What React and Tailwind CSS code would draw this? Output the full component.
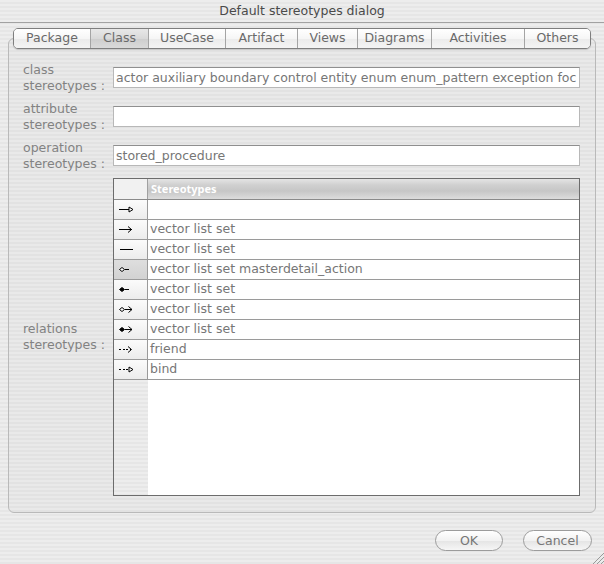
import React from 'react';

const TABS = [
  { name: 'Package',    w: 'w-[76px]' },
  { name: 'Class',      w: 'w-[58px]', active: true },
  { name: 'UseCase',    w: 'w-[77px]' },
  { name: 'Artifact',   w: 'w-[72px]' },
  { name: 'Views',      w: 'w-[60px]' },
  { name: 'Diagrams',   w: 'w-[74px]' },
  { name: 'Activities', w: 'w-[93px]' },
  { name: 'Others',     w: 'w-[66px]' },
];

const ROWS = [
  { icon: 'generalisation', text: '' },
  { icon: 'arrow',          text: 'vector list set' },
  { icon: 'line',           text: 'vector list set' },
  { icon: 'aggregation',    text: 'vector list set masterdetail_action', selected: true },
  { icon: 'composition',    text: 'vector list set' },
  { icon: 'aggArrow',       text: 'vector list set' },
  { icon: 'compArrow',      text: 'vector list set' },
  { icon: 'dependency',     text: 'friend' },
  { icon: 'realize',        text: 'bind' },
];

const STRIPES = 'bg-[repeating-linear-gradient(180deg,#ededed_0px,#ededed_2px,#e6e6e6_2px,#e6e6e6_4px)]';

function Diamond({ filled }) {
  return <polygon points="0.5,4.5 3,2.5 5.5,4.5 3,6.5" fill={filled ? '#000' : '#fff'} stroke="#000" strokeWidth="1" />;
}

function RelIcon({ kind }) {
  const line = (x1, x2, dashed) => (
    <line x1={x1} y1="4.5" x2={x2} y2="4.5" stroke="#000" strokeWidth="1"
      strokeDasharray={dashed ? '2 1.5' : undefined} shapeRendering="crispEdges" />
  );
  const head = (x) => <polyline points={`${x - 3.5},1.5 ${x},4.5 ${x - 3.5},7.5`} fill="none" stroke="#000" strokeWidth="1" />;
  const tri  = (x) => <polygon points={`${x - 4},2 ${x},4.5 ${x - 4},7`} fill="#fff" stroke="#000" strokeWidth="1" />;

  return (
    <svg width="16" height="9" viewBox="0 0 16 9">
      {kind === 'generalisation' && <>{line(0, 10)}{tri(14)}</>}
      {kind === 'arrow'          && <>{line(0, 12.5)}{head(12.5)}</>}
      {kind === 'line'           && line(1, 14)}
      {kind === 'aggregation'    && <>{line(5.5, 10)}<Diamond /></>}
      {kind === 'composition'    && <>{line(5.5, 10)}<Diamond filled /></>}
      {kind === 'aggArrow'       && <>{line(5.5, 13)}{head(13)}<Diamond /></>}
      {kind === 'compArrow'      && <>{line(5.5, 13)}{head(13)}<Diamond filled /></>}
      {kind === 'dependency'     && <>{line(0, 12, true)}{head(12.5)}</>}
      {kind === 'realize'        && <>{line(0, 10, true)}{tri(14)}</>}
    </svg>
  );
}

function Label({ first, second = 'stereotypes :' }) {
  return (
    <div className="w-[90px] shrink-0 leading-[16px] text-[#828282]">
      <div>{first}</div>
      <div>{second}</div>
    </div>
  );
}

function Field({ value }) {
  return (
    <div className="flex-1 h-[21px] bg-white border border-[#b8b8b8] border-t-[#8f8f8f] pl-[2px] overflow-hidden whitespace-nowrap leading-[19px] text-[#767676]">
      {value}
    </div>
  );
}

export default function App() {
  return (
    <div className={`relative w-[604px] h-[564px] overflow-hidden ${STRIPES} text-[12.5px] font-['DejaVu_Sans',sans-serif]`}>
      {/* title bar */}
      <div className="h-[23px] border-b border-[#a2a2a2] text-center leading-[22px] text-[#4a4a4a]">
        Default stereotypes dialog
      </div>

      <div className="pt-[5px]">
        {/* tabs */}
        <div className="relative z-10 flex justify-center">
          <div className="flex h-[21px] rounded-[5px] border border-[#7e7e7e] overflow-hidden shadow-[0_1px_1px_rgba(0,0,0,0.15)]">
            {TABS.map((t, i) => (
              <div key={t.name}
                className={`${t.w} ${i > 0 ? 'border-l border-[#a4a4a4]' : ''} flex items-center justify-center text-[#6a6a6a]
                  ${t.active
                    ? 'bg-[linear-gradient(180deg,#e8e8e8_0%,#d9d9d9_50%,#cdcdcd_51%,#dadada_100%)]'
                    : 'bg-[linear-gradient(180deg,#ffffff_0%,#f6f6f6_50%,#ebebeb_51%,#f4f4f4_100%)]'}`}>
                {t.name}
              </div>
            ))}
          </div>
        </div>

        {/* panel */}
        <div className="mx-[8px] -mt-[11px] h-[475px] rounded-[6px] border border-[#b9b9b9] bg-black/[0.015] pt-[19px] pl-[14px] pr-[15px]">
          <div className="flex items-center h-[39px]">
            <Label first="class" />
            <Field value="actor auxiliary boundary control entity enum enum_pattern exception foc" />
          </div>
          <div className="flex items-center h-[39px]">
            <Label first="attribute" />
            <Field value="" />
          </div>
          <div className="flex items-center h-[39px]">
            <Label first="operation" />
            <Field value="stored_procedure" />
          </div>

          <div className="flex items-center mt-[3px]">
            <Label first="relations" />
            <div className="flex-1 h-[318px] border border-[#6c6c6c] flex flex-col bg-white">
              {/* header */}
              <div className="flex h-[21px] shrink-0 border-b border-[#8a8a8a]">
                <div className="w-[34px] border-r border-[#a0a0a0] bg-[#f1f1f1]" />
                <div className="flex-1 pl-[3px] flex items-center bg-[linear-gradient(180deg,#e4e4e4_0%,#d0d0d0_30%,#c6c6c6_60%,#dcdcdc_100%)] text-white font-['Noto_Sans',sans-serif] font-bold text-[11px]">
                  Stereotypes
                </div>
              </div>

              {ROWS.map((r, i) => (
                <div key={i} className="flex h-[20px] shrink-0 border-b border-[#9a9a9a]">
                  <div className={`w-[34px] border-r border-[#9a9a9a] pl-[5px] flex items-center
                    ${r.selected
                      ? 'bg-[linear-gradient(180deg,#dedede_0%,#d2d2d2_100%)]'
                      : 'bg-[linear-gradient(180deg,#fbfbfb_0%,#ececec_100%)]'}`}>
                    <RelIcon kind={r.icon} />
                  </div>
                  <div className="flex-1 pl-[2px] flex items-center text-[#767676] whitespace-nowrap overflow-hidden">
                    {r.text}
                  </div>
                </div>
              ))}

              <div className="flex flex-1">
                <div className={`w-[34px] ${STRIPES}`} />
                <div className="flex-1 bg-white" />
              </div>
            </div>
          </div>
        </div>

        {/* buttons */}
        <div className="flex justify-end gap-[20px] pr-[12px] mt-[17px]">
          <button className="w-[68px] h-[21px] rounded-full border border-[#9c9c9c] bg-[linear-gradient(180deg,#ffffff_0%,#f2f2f2_50%,#e4e4e4_51%,#f6f6f6_100%)] text-[#777] leading-[19px]">
            OK
          </button>
          <button className="w-[69px] h-[21px] rounded-full border border-[#9c9c9c] bg-[linear-gradient(180deg,#ffffff_0%,#f2f2f2_50%,#e4e4e4_51%,#f6f6f6_100%)] text-[#777] leading-[19px]">
            Cancel
          </button>
        </div>
      </div>

      {/* resize grip */}
      <svg className="absolute right-0 bottom-0" width="14" height="14" viewBox="0 0 14 14">
        <line x1="3" y1="14" x2="14" y2="3" stroke="#9a9a9a" strokeWidth="1" />
        <line x1="7" y1="14" x2="14" y2="7" stroke="#9a9a9a" strokeWidth="1" />
        <line x1="11" y1="14" x2="14" y2="11" stroke="#9a9a9a" strokeWidth="1" />
      </svg>
    </div>
  );
}
